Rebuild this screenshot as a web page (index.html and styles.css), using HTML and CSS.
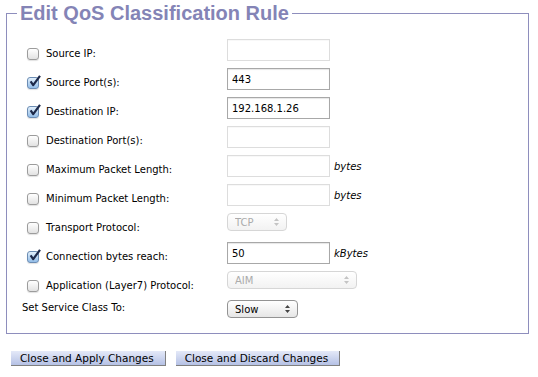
FILE: index.html
```html
<!DOCTYPE html>
<html lang="en">
<head>
<meta charset="UTF-8" />
<title>Edit QoS Classification Rule</title>
<link rel="stylesheet" href="styles.css">
</head>
<body>

  <div class="page">
    <fieldset class="rule">
      <legend>Edit QoS Classification Rule</legend>

      <div class="rows">
        <label class="opt"><span class="box"></span>Source IP:</label>
        <div class="field"><input class="text" type="text" disabled></div>

        <label class="opt"><span class="box on"><svg width="14" height="14" viewBox="0 0 14 14"><path d="M2.6 6.4 L5.2 10.2 L12 0.8" fill="none" stroke="#1d2949" stroke-width="2.2" stroke-linejoin="round"/></svg></span>Source Port(s):</label>
        <div class="field"><input class="text" type="text" value="443"></div>

        <label class="opt"><span class="box on"><svg width="14" height="14" viewBox="0 0 14 14"><path d="M2.6 6.4 L5.2 10.2 L12 0.8" fill="none" stroke="#1d2949" stroke-width="2.2" stroke-linejoin="round"/></svg></span>Destination IP:</label>
        <div class="field"><input class="text" type="text" value="192.168.1.26"></div>

        <label class="opt"><span class="box"></span>Destination Port(s):</label>
        <div class="field"><input class="text" type="text" disabled></div>

        <label class="opt"><span class="box"></span>Maximum Packet Length:</label>
        <div class="field"><input class="text" type="text" disabled><em class="unit">bytes</em></div>

        <label class="opt"><span class="box"></span>Minimum Packet Length:</label>
        <div class="field"><input class="text" type="text" disabled><em class="unit">bytes</em></div>

        <label class="opt"><span class="box"></span>Transport Protocol:</label>
        <div class="field top">
          <span class="pick">
            <select class="proto" disabled><option>TCP</option></select>
            <svg width="5" height="8" viewBox="0 0 5 8"><path d="M0 3 L2.5 0 L5 3 Z M0 5 L2.5 8 L5 5 Z" fill="#c4c4c4"/></svg>
          </span>
        </div>

        <label class="opt"><span class="box on"><svg width="14" height="14" viewBox="0 0 14 14"><path d="M2.6 6.4 L5.2 10.2 L12 0.8" fill="none" stroke="#1d2949" stroke-width="2.2" stroke-linejoin="round"/></svg></span>Connection bytes reach:</label>
        <div class="field"><input class="text" type="text" value="50"><em class="unit">kBytes</em></div>

        <label class="opt"><span class="box"></span>Application (Layer7) Protocol:</label>
        <div class="field top">
          <span class="pick">
            <select class="app" disabled><option>AIM</option></select>
            <svg width="5" height="8" viewBox="0 0 5 8"><path d="M0 3 L2.5 0 L5 3 Z M0 5 L2.5 8 L5 5 Z" fill="#c4c4c4"/></svg>
          </span>
        </div>

        <label class="plain">Set Service Class To:</label>
        <div class="field top">
          <span class="pick">
            <select class="klass"><option>Slow</option><option>Normal</option><option>Fast</option></select>
            <svg width="5" height="8" viewBox="0 0 5 8"><path d="M0 3 L2.5 0 L5 3 Z M0 5 L2.5 8 L5 5 Z" fill="#444"/></svg>
          </span>
        </div>
      </div>
    </fieldset>

    <div class="actions">
      <button type="button" class="btn">Close and Apply Changes</button>
      <button type="button" class="btn">Close and Discard Changes</button>
    </div>
  </div>

</body>
</html>
```

FILE: styles.css
```css
body {
  margin: 0;
  font-family: "DejaVu Sans", Verdana, sans-serif;
  font-size: 10px;
  color: #000;
  background-color: #ffffff;
}
.page {
  padding: 0 9px 0 6px;
}
.rule {
  margin: 1px 0 0 0;
  padding: 11px 0 7px 0;
  border: 1px solid #8e8ebd;
}
.rule legend {
  margin-left: 10px;
  padding: 0 3px;
  font: bold 20px/24px "Liberation Sans", Arial, sans-serif;
  color: #8484b6;
}
.rows {
  display: grid;
  grid-template-columns: 205px 1fr;
  grid-auto-rows: 29px;
  padding-left: 15px;
}
.opt {
  display: flex;
  align-items: center;
  gap: 7px;
  align-self: start;
  margin: 12px 0 0 5px;
  line-height: 12px;
}
.plain {
  align-self: start;
  margin-top: 5px;
  line-height: 12px;
}
.box {
  position: relative;
  display: inline-block;
  width: 12px;
  height: 12px;
  box-sizing: border-box;
  border: 1px solid #9c9c9c;
  border-radius: 3px;
  background: linear-gradient(#ffffff, #e2e2e2);
  box-shadow: 0 1px 1px rgba(0, 0, 0, 0.12);
}
.box.on {
  border-color: #6c8db4;
  background: linear-gradient(#e2f0fc, #93bde8);
}
.box svg {
  position: absolute;
  left: 0;
  top: -3px;
}
.field {
  display: flex;
  align-items: center;
  gap: 4px;
  align-self: start;
  height: 22px;
  margin-top: 3px;
}
.field.top {
  align-items: flex-start;
}
.text {
  width: 103px;
  height: 22px;
  box-sizing: border-box;
  margin: 0;
  padding: 0 4px;
  border: 1px solid #a8a8a8;
  font: 10px "DejaVu Sans", Verdana, sans-serif;
  color: #000;
  background: #fff;
  box-shadow: inset 0 1px 1px rgba(0, 0, 0, 0.1);
}
.text:disabled {
  border-color: #dddddd;
  box-shadow: inset 0 1px 1px rgba(0, 0, 0, 0.03);
}
.unit {
  font-size: 10px;
}
.pick {
  position: relative;
  display: block;
  height: 18px;
}
.pick select {
  -webkit-appearance: none;
  appearance: none;
  display: block;
  height: 18px;
  box-sizing: border-box;
  margin: 0;
  padding: 0 0 0 7px;
  border: 1px solid #939393;
  border-radius: 4px;
  font: 10px "DejaVu Sans", Verdana, sans-serif;
  color: #000;
  background: linear-gradient(#ffffff, #e6e6e6);
}
.pick select:disabled {
  opacity: 1;
  border-color: #d6d6d6;
  color: #ababab;
  background: linear-gradient(#ffffff, #f2f2f2);
}
.pick svg {
  position: absolute;
  right: 8px;
  top: 5px;
  pointer-events: none;
}
.proto {
  width: 60px;
}
.app {
  width: 130px;
}
.klass {
  width: 71px;
}
.actions {
  display: flex;
  gap: 10px;
  margin: 17px 0 0 5px;
}
.btn {
  height: 15px;
  margin: 0;
  padding: 0 11px 0 9px;
  border: 0;
  border-right: 1px solid #808080;
  border-bottom: 1px solid #808080;
  font: 10.5px/14px "DejaVu Sans", Verdana, sans-serif;
  color: #000;
  background: linear-gradient(#e4e9f8, #b5c1e5);
}
```
